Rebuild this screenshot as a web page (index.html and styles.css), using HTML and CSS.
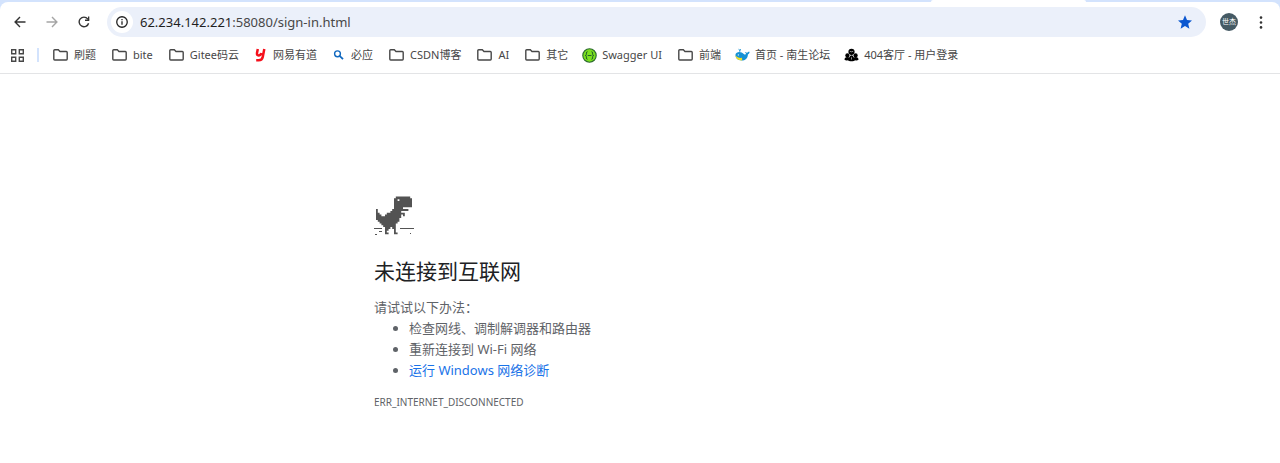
FILE: index.html
```html
<!DOCTYPE html>
<html lang="zh-CN">
<head>
<meta charset="utf-8">
<title>62.234.142.221:58080</title>
<link rel="stylesheet" href="styles.css">
</head>
<body>
<svg class="defs" aria-hidden="true">
  <symbol id="folder" viewBox="0 0 15 12"><path d="M1.7.8h3.6l1.7 1.7h6.3a.9.9 0 0 1 .9.9v6.7a.9.9 0 0 1-.9.9H1.7a.9.9 0 0 1-.9-.9V1.7a.9.9 0 0 1 .9-.9z" fill="none" stroke="#474747" stroke-width="1.4"/></symbol>
</svg>
<header class="browser">
  <div class="tabstrip"><div class="tab"></div></div>
  <div class="chrome">
    <div class="toolbar">
      <nav class="nav">
        <button class="tool" aria-label="后退"><svg width="12" height="12" viewBox="0 0 12 12"><path d="M11.5 6H1.3M6 1.1 1.1 6 6 10.9" fill="none" stroke="#333" stroke-width="1.4"/></svg></button>
        <button class="tool" aria-label="前进" disabled><svg width="12" height="12" viewBox="0 0 12 12"><path d="M.5 6h10.2M6 1.1 10.9 6 6 10.9" fill="none" stroke="#a5a5a5" stroke-width="1.4"/></svg></button>
        <button class="tool" aria-label="重新加载"><svg width="12" height="12" viewBox="0 0 12 12"><path d="M10.6 7.2A4.8 4.8 0 1 1 9.7 2.9L10.8 4" fill="none" stroke="#333" stroke-width="1.4"/><path d="M11.3.6v4.300H7V3.600h3V.6z" fill="#333"/></svg></button>
      </nav>
      <form class="omnibox">
        <button class="info" type="button" aria-label="查看网站信息"><svg width="12" height="12" viewBox="0 0 13 13"><circle cx="6.5" cy="6.5" r="5.700" fill="none" stroke="#222" stroke-width="1.4"/><path d="M6.5 5.8v3.8M6.5 3.3v1.4" stroke="#222" stroke-width="1.4"/></svg></button>
        <div class="url" role="textbox" aria-label="地址栏" contenteditable="true" spellcheck="false"><span class="host">62.234.142.221</span>:58080/sign-in.html</div>
        <button class="star" type="button" aria-label="修改书签"><svg width="14" height="14" viewBox="0 0 14 14"><path d="M7 .3 9 5l5 .4-3.800 3.300L11.400 13.700 7 11l-4.400 2.700L3.800 8.700 0 5.400 5 5z" fill="#0b57d0"/></svg></button>
      </form>
      <button class="avatar" aria-label="个人资料">世杰</button>
      <button class="tool" aria-label="菜单"><svg width="4" height="13" viewBox="0 0 4 13" fill="#333"><circle cx="2" cy="1.600" r="1.300"/><circle cx="2" cy="6.500" r="1.300"/><circle cx="2" cy="11.400" r="1.300"/></svg></button>
    </div>
    <nav class="bookmarks" aria-label="书签">
      <button class="apps" aria-label="应用"><svg width="13" height="13" viewBox="0 0 13 13" fill="none" stroke="#474747" stroke-width="1.400"><path d="M.7.7h4v4h-4zM8.300.7h4v4h-4zM.7 8.300h4v4h-4zM8.300 8.300h4v4h-4z"/></svg></button>
      <span class="divider"></span>
      <a class="mark" href="#"><svg width="15" height="12"><use href="#folder"/></svg>刷题</a>
      <a class="mark" href="#"><svg width="15" height="12"><use href="#folder"/></svg>bite</a>
      <a class="mark" href="#"><svg width="15" height="12"><use href="#folder"/></svg>Gitee码云</a>
      <a class="mark site" href="#"><svg width="15" height="14" viewBox="0 0 15 14"><path d="M4.800 1 4 5q-.4 2.400 1.600 2.400 2.200 0 2.800-2.400M11.300 1 9.800 8.700Q9.100 12.300 5.700 12.300H3.200" fill="none" stroke="#f5101c" stroke-width="2.500"/></svg>网易有道</a>
      <a class="mark site" href="#"><svg width="15" height="12" viewBox="0 0 15 12"><circle cx="6.500" cy="4.800" r="2.900" fill="none" stroke="#1068bf" stroke-width="1.400"/><path d="m8.600 6.900 3.400 3.300" stroke="#1068bf" stroke-width="1.800"/></svg>必应</a>
      <a class="mark" href="#"><svg width="15" height="12"><use href="#folder"/></svg>CSDN博客</a>
      <a class="mark" href="#"><svg width="15" height="12"><use href="#folder"/></svg>AI</a>
      <a class="mark" href="#"><svg width="15" height="12"><use href="#folder"/></svg>其它</a>
      <a class="mark site" href="#"><svg width="15" height="15" viewBox="0 0 15 15"><circle cx="7.500" cy="7.500" r="6.700" fill="#7be01e" stroke="#2c6b2f" stroke-width="1.100"/><path d="M5.600 3.700Q4.400 3.700 4.400 5v1.300q0 1.200-1.200 1.200 1.200 0 1.200 1.200V10q0 1.300 1.200 1.300M9.400 3.700q1.200 0 1.200 1.300v1.300q0 1.200 1.200 1.200-1.200 0-1.200 1.200V10q0 1.300-1.200 1.300M5.700 7.500h3.800" fill="none" stroke="#23632a" stroke-width="1"/></svg>Swagger UI</a>
      <a class="mark" href="#"><svg width="15" height="12"><use href="#folder"/></svg>前端</a>
      <a class="mark site" href="#"><svg width="15" height="14" viewBox="0 0 15 14"><path d="M.5 6.500C1 3.200 6.500 3 8.800 6c1 .9 2 .6 2.400-.2L9.700 4.300c1.100-.3 2 0 2.400.7.400-.8 1.300-1.300 2.500-1.200-.1 1.500-.8 2.300-1.700 2.600C12.800 10.500 10 12.500 6.800 12.500 2.500 12.500.1 9.500.5 6.500z" fill="#1691d5"/><path d="M.5 7.300c1.500 2.200 4.200 3 6.200 2.500.7 1 .7 1.900.1 2.700C3.500 12.600.6 10.500.5 7.300z" fill="#f3df22"/><circle cx="3.300" cy="6.900" r=".6" fill="#fff"/><path d="M4.800 3.800V2M3.600 1.300l1.200.8L6 1.500" fill="none" stroke="#1691d5" stroke-width="1"/></svg>首页 - 南生论坛</a>
      <a class="mark site" href="#"><svg width="15" height="14" viewBox="0 0 15 14"><circle cx="7.500" cy="3.800" r="3.100"/><circle cx="3.400" cy="7.400" r="2.100"/><circle cx="11.600" cy="7.400" r="2.100"/><path d="M.5 11.800q0-2.800 3-2.800 1 0 1.700.6 1-2.300 2.300-2.300t2.300 2.300q.7-.6 1.700-.6 3 0 3 2.800-1.800 1.400-3.300.4-1.700 1.600-3.700 1-2 .6-3.700-1-1.500 1-3.300-.4z"/><path d="M5.800 3.300q1.700 1 3.400 0M7.500 9.300v2.200" fill="none" stroke="#ccc" stroke-width=".7"/></svg>404客厅 - 用户登录</a>
    </nav>
  </div>
</header>
<main class="error">
  <svg class="dino" width="40" height="40" viewBox="0 0 40 40" fill="#535353" role="img" aria-label="恐龙">
    <path transform="translate(2 .500) scale(1.800)" fill-rule="evenodd" d="M11 0H19V1H20V6H15V7H18V8H14V9H16V11H15V10H14V12H13V14H12V15H11V20H12V21H10V18H9V17H8V18H7V19H6V20H7V21H5V17H4V16H3V15H2V14H1V13H0V7H1V9H2V10H3V11H5V10H6V9H8V8H9V7H10V1H11zM12 1.500V2.500H13V1.500z"/>
    <path d="M0 32h8v1H0zM26 32h14v1H26zM5 35h3v1H5zM1 38h2v1H1zM36 37h1v1h-1z"/>
  </svg>
  <h1 class="title">未连接到互联网</h1>
  <p class="lead">请试试以下办法：</p>
  <ul class="tips">
    <li>检查网线、调制解调器和路由器</li>
    <li>重新连接到 Wi-Fi 网络</li>
    <li><a href="#">运行 Windows 网络诊断</a></li>
  </ul>
  <p class="code">ERR_INTERNET_DISCONNECTED</p>
</main>
</body>
</html>
```
FILE: styles.css
```css
* { box-sizing: border-box; }
body {
  margin: 0;
  background: #fff;
  color: #5f6368;
  font-family: "Noto Sans", "Noto Sans CJK SC", sans-serif;
  font-size: 13px;
}
button { border: 0; padding: 0; background: none; font: inherit; }
svg { display: block; flex: none; }
.defs { position: absolute; width: 0; height: 0; }

.browser { background: #d3e3fd; border-bottom: 1px solid #e3e4e6; }
.tabstrip { height: 2px; display: flex; padding-left: 931px; }
.tab { width: 155px; background: #fff; border-radius: 4px 4px 0 0; }
.chrome { background: #fff; border-radius: 8px 8px 0 0; }

.toolbar { display: flex; align-items: center; padding: 5px 9px 0 10px; }
.nav { display: flex; gap: 12px; margin-right: 13px; }
.tool { width: 20px; height: 20px; display: flex; align-items: center; justify-content: center; }
.omnibox {
  flex: 1;
  height: 30px;
  display: flex;
  align-items: center;
  padding: 0 14px 0 4px;
  border-radius: 15px;
  background: #ebf0fa;
}
.info { width: 22px; height: 22px; border-radius: 50%; background: #fff; display: flex; align-items: center; justify-content: center; }
.url { flex: 1; margin-left: 7px; outline: 0; line-height: 20px; white-space: nowrap; color: #474747; }
.host { color: #1f1f1f; }
.avatar {
  width: 18px;
  height: 18px;
  margin: 0 13px 0 14px;
  border-radius: 50%;
  background: #455a64;
  color: #fff;
  font-size: 7px;
  line-height: 18px;
  text-align: center;
}

.bookmarks { display: flex; align-items: center; height: 36px; padding-left: 11px; gap: 16px; }
.divider { width: 2px; height: 14px; margin-left: -3px; margin-right: -2px; background: #d3e3fd; }
.mark { display: flex; align-items: center; gap: 6px; color: #474747; font-size: 11px; line-height: 16px; white-space: nowrap; text-decoration: none; }
.site { gap: 5px; margin-left: -2px; }

.error { width: 46%; max-width: 532px; margin: 0 auto; padding-top: 122px; }
.title { margin: 19px 0 0; color: #202124; font-size: 21px; font-weight: 400; line-height: 32px; }
.lead { margin: 10px 0 0; line-height: 21px; }
.tips { margin: 0; padding-left: 35px; line-height: 21px; }
.tips a { color: #1a73e8; text-decoration: none; }
.code { margin: 11px 0 0; font-size: 10px; line-height: 20px; }
```
